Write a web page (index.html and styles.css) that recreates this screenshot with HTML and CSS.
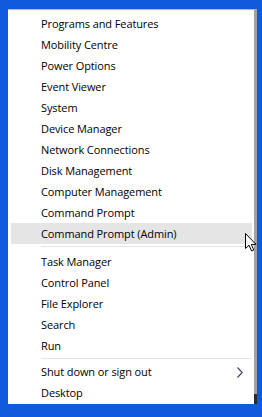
FILE: index.html
```html
<!DOCTYPE html>
<html lang="en">
<head>
    <meta charset="UTF-8">
    <title>Quick Link Menu</title>
    <link rel="stylesheet" href="styles.css">
</head>
<body>
    <div class="menu">
        <ul class="menu-list">
            <li class="menu-item">Programs and Features</li>
            <li class="menu-item">Mobility Centre</li>
            <li class="menu-item">Power Options</li>
            <li class="menu-item">Event Viewer</li>
            <li class="menu-item">System</li>
            <li class="menu-item">Device Manager</li>
            <li class="menu-item">Network Connections</li>
            <li class="menu-item">Disk Management</li>
            <li class="menu-item">Computer Management</li>
            <li class="menu-item">Command Prompt</li>
            <li class="menu-item hover">Command Prompt (Admin)</li>
            <li class="menu-sep"></li>
            <li class="menu-item">Task Manager</li>
            <li class="menu-item">Control Panel</li>
            <li class="menu-item">File Explorer</li>
            <li class="menu-item">Search</li>
            <li class="menu-item">Run</li>
            <li class="menu-sep sep-tight"></li>
            <li class="menu-item has-sub">
                <span>Shut down or sign out</span>
                <svg class="chevron" width="6" height="11" viewBox="0 0 6 11">
                    <polyline points="0.5,0.5 5.2,5.5 0.5,10.5" fill="none" stroke="#3a3a5a" stroke-width="1.1"/>
                </svg>
            </li>
            <li class="menu-item">Desktop</li>
        </ul>

        <!-- mouse pointer over the admin prompt row -->
        <svg class="cursor" width="12" height="19" viewBox="0 0 12 19">
            <path d="M0.5,0.5 L0.5,15.5 L4,12.2 L6.6,18 L8.8,17 L6.3,11.4 L11,11.4 Z" fill="#fff" stroke="#000" stroke-width="1" stroke-linejoin="miter"/>
        </svg>
    </div>
</body>
</html>
```

FILE: styles.css
```css
/* Win+X quick link menu */
* { margin: 0; padding: 0; box-sizing: border-box; }

body {
    background: #115ade;
    font-family: 'Open Sans', 'Noto Sans', sans-serif;
    font-size: 11px;
    letter-spacing: -0.1px;
    color: #000;
    padding: 9px 0 0 8px;
    height: 417px;
    overflow: hidden;
}

.menu {
    position: relative;
    width: 249px;
    height: 395px;
    background: #fff;
    border-top: 1px solid #b9b9b9;
    border-right: 3px solid #a2a2a2;
    padding-top: 3px;
}

/* dark end of the window edge at the bottom right */
.menu::after {
    content: "";
    position: absolute;
    right: -3px;
    bottom: 0;
    width: 3px;
    height: 10px;
    background: #2b2b2b;
}

.menu-list { list-style: none; }

.menu-item {
    height: 21px;
    line-height: 20px;
    margin: 0 2px 0 3px;
    padding: 1px 0 0 30px;
    white-space: nowrap;
}
.menu-item.hover { background: #e5e5e5; }

.has-sub {
    display: flex;
    justify-content: space-between;
    align-items: center;
    padding-right: 9px;
}
.chevron { display: block; }

.menu-sep {
    height: 1px;
    margin: 2px 2px 4px 33px;
    background: #e3e3e3;
}
.sep-tight { margin: 2px 2px 2px 33px; }

.cursor {
    position: absolute;
    left: 237px;
    top: 223px;
}
```
